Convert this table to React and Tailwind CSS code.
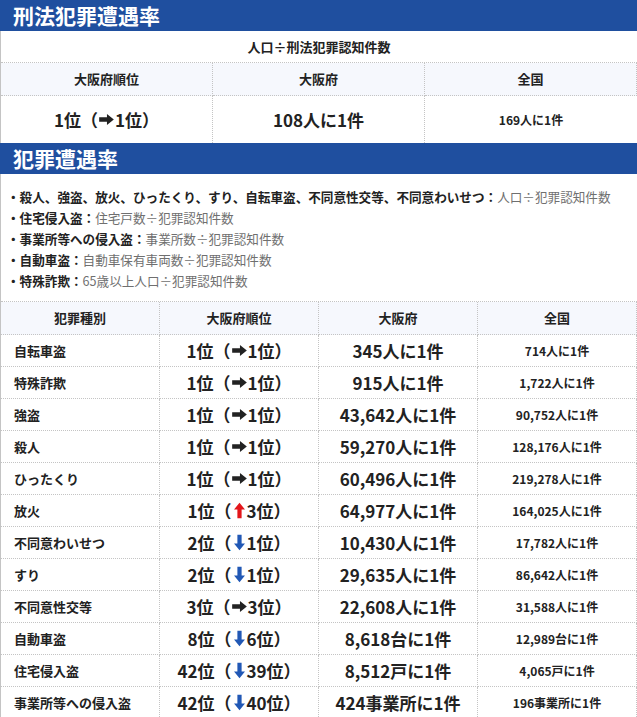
const rows = [
  ['自転車盗', '1', 'right', '1', '345人に1件', '714人に1件'],
  ['特殊詐欺', '1', 'right', '1', '915人に1件', '1,722人に1件'],
  ['強盗', '1', 'right', '1', '43,642人に1件', '90,752人に1件'],
  ['殺人', '1', 'right', '1', '59,270人に1件', '128,176人に1件'],
  ['ひったくり', '1', 'right', '1', '60,496人に1件', '219,278人に1件'],
  ['放火', '1', 'up', '3', '64,977人に1件', '164,025人に1件'],
  ['不同意わいせつ', '2', 'down', '1', '10,430人に1件', '17,782人に1件'],
  ['すり', '2', 'down', '1', '29,635人に1件', '86,642人に1件'],
  ['不同意性交等', '3', 'right', '3', '22,608人に1件', '31,588人に1件'],
  ['自動車盗', '8', 'down', '6', '8,618台に1件', '12,989台に1件'],
  ['住宅侵入盗', '42', 'down', '39', '8,512戸に1件', '4,065戸に1件'],
  ['事業所等への侵入盗', '42', 'down', '40', '424事業所に1件', '196事業所に1件'],
];

const notes = [
  ['殺人、強盗、放火、ひったくり、すり、自転車盗、不同意性交等、不同意わいせつ', '人口÷犯罪認知件数'],
  ['住宅侵入盗', '住宅戸数÷犯罪認知件数'],
  ['事業所等への侵入盗', '事業所数÷犯罪認知件数'],
  ['自動車盗', '自動車保有車両数÷犯罪認知件数'],
  ['特殊詐欺', '65歳以上人口÷犯罪認知件数'],
];

function Arrow({ dir }) {
  if (dir === 'up') {
    return (
      <svg viewBox="0 0 12 17" className="w-[11px] h-[17px] mx-[2px]">
        <path d="M6 0l6 7.5H8.3V17H3.7V7.5H0z" fill="#e3161b" />
      </svg>
    );
  }
  if (dir === 'down') {
    return (
      <svg viewBox="0 0 12 17" className="w-[11px] h-[17px] mx-[2px]">
        <path d="M3.7 0h4.6v9.5H12L6 17 0 9.5h3.7z" fill="#2158b5" />
      </svg>
    );
  }
  return (
    <svg viewBox="0 0 16 12" className="w-[15px] h-[11px] mx-[1px]">
      <path d="M0 3.6h8.5V0L16 6l-7.5 6V8.4H0z" fill="#222" />
    </svg>
  );
}

function Rank({ now, dir, prev }) {
  return (
    <span className="inline-flex items-center">
      {now}位（<Arrow dir={dir} />{prev}位）
    </span>
  );
}

const cell = 'border-r border-b border-dotted border-[#c4c4c4] flex items-center justify-center';

export default function App() {
  return (
    <div className="w-[637px] bg-white text-[#222] font-['Noto_Sans_CJK_JP','Noto_Sans',sans-serif]">
      <h2 className="h-[31px] bg-[#1f4f9f] text-white text-[21px] font-bold px-[13px] flex items-center leading-none">刑法犯罪遭遇率</h2>
      <div className="border-l border-[#c4c4c4]">
        <div className="h-[32px] border-b border-dotted border-[#c4c4c4] flex items-center justify-center text-[13px] font-bold">人口÷刑法犯罪認知件数</div>
        <div className="grid grid-cols-3">
          {['大阪府順位', '大阪府', '全国'].map((h) => (
            <div key={h} className={`${cell} h-[33px] bg-[#f6f8fd] text-[13px] font-bold`}>{h}</div>
          ))}
          <div className="border-r border-dotted border-[#c4c4c4] h-[47px] flex items-center justify-center text-[17px] font-bold">
            <Rank now="1" dir="right" prev="1" />
          </div>
          <div className="border-r border-dotted border-[#c4c4c4] h-[47px] flex items-center justify-center text-[17px] font-bold">108人に1件</div>
          <div className="h-[47px] flex items-center justify-center text-[12px] font-bold">169人に1件</div>
        </div>
      </div>

      <h2 className="h-[31px] bg-[#1f4f9f] text-white text-[21px] font-bold px-[13px] flex items-center leading-none">犯罪遭遇率</h2>
      <div className="border-l border-[#c4c4c4]">
        <ul className="pt-[12px] pb-[10px] pl-[6px] text-[12.6px] leading-[21px] border-b border-dotted border-[#c4c4c4]">
          {notes.map(([k, v]) => (
            <li key={k}>
              <span className="font-bold">・{k}：</span>
              <span className="text-[#6f6f6f]">{v}</span>
            </li>
          ))}
        </ul>
        <div className="grid grid-cols-4">
          {['犯罪種別', '大阪府順位', '大阪府', '全国'].map((h) => (
            <div key={h} className={`${cell} h-[33px] bg-[#f6f8fd] text-[13px] font-bold`}>{h}</div>
          ))}
          {rows.map(([name, now, dir, prev, osaka, zenkoku]) => (
            <div key={name} className="contents">
              <div className={`${cell} h-[32px] !justify-start pl-[13px] text-[13px] font-bold`}>{name}</div>
              <div className={`${cell} h-[32px] text-[17px] font-bold`}>
                <Rank now={now} dir={dir} prev={prev} />
              </div>
              <div className={`${cell} h-[32px] text-[17px] font-bold`}>{osaka}</div>
              <div className={`${cell} h-[32px] text-[12px] font-bold`}>{zenkoku}</div>
            </div>
          ))}
        </div>
      </div>
    </div>
  );
}
